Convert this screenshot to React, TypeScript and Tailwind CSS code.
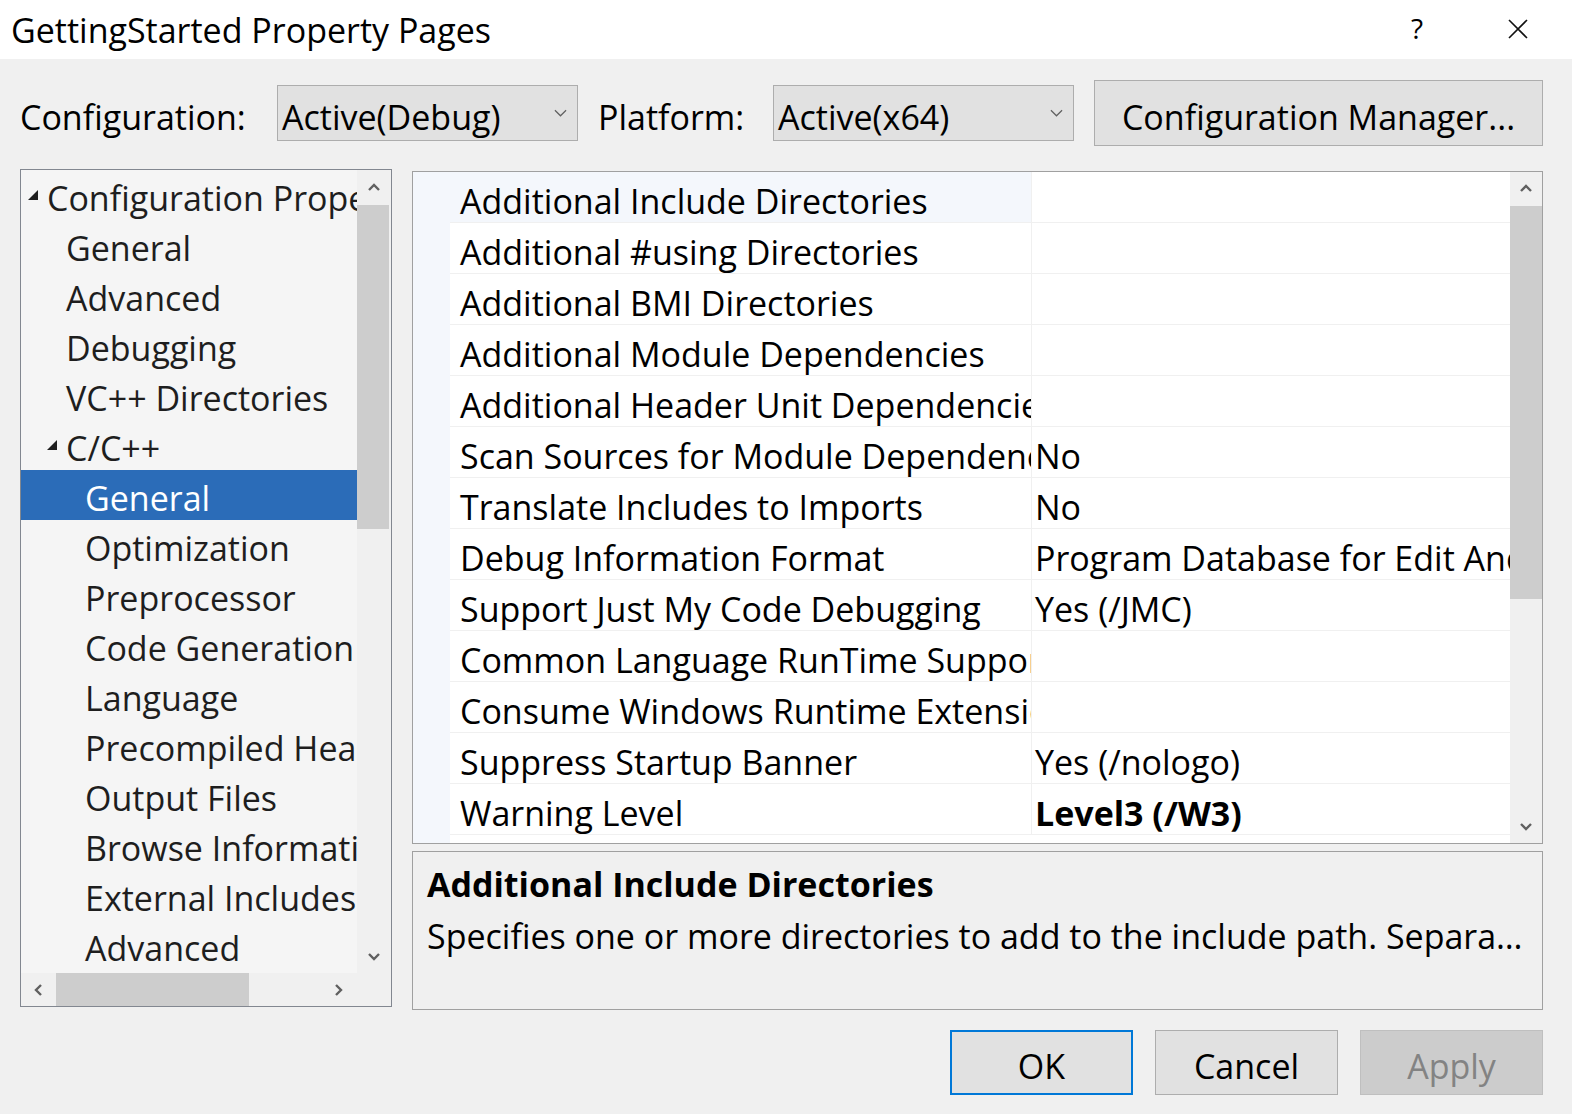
import React from 'react';

const font = { fontFamily: '"Open Sans", "Noto Sans", sans-serif' };

type Dir = 'up' | 'down' | 'left' | 'right';

const Chevron = ({ dir, className }: { dir: Dir; className?: string }) => {
    const pts: Record<Dir, string> = {
        up: '1,8 6,3 11,8',
        down: '1,4 6,9 11,4',
        left: '8,1 3,6 8,11',
        right: '4,1 9,6 4,11',
    };
    return (
        <svg viewBox="0 0 12 12" className={className ?? 'w-[12px] h-[12px]'}>
            <polyline points={pts[dir]} fill="none" stroke="#606060" strokeWidth="2.4" />
        </svg>
    );
};

const ComboArrow = () => (
    <svg viewBox="0 0 14 8" className="w-[13px] h-[8px]">
        <polyline points="1,1 7,7 13,1" fill="none" stroke="#606060" strokeWidth="1.3" />
    </svg>
);

const Expander = () => (
    <svg viewBox="0 0 10 10" className="w-[10px] h-[10px]">
        <polygon points="10,0 10,10 0,10" fill="#1e1e1e" />
    </svg>
);

interface TreeItem {
    label: string;
    level: number;
    expanded?: boolean;
    selected?: boolean;
}

const treeItems: TreeItem[] = [
    { label: 'Configuration Properties', level: 0, expanded: true },
    { label: 'General', level: 1 },
    { label: 'Advanced', level: 1 },
    { label: 'Debugging', level: 1 },
    { label: 'VC++ Directories', level: 1 },
    { label: 'C/C++', level: 1, expanded: true },
    { label: 'General', level: 2, selected: true },
    { label: 'Optimization', level: 2 },
    { label: 'Preprocessor', level: 2 },
    { label: 'Code Generation', level: 2 },
    { label: 'Language', level: 2 },
    { label: 'Precompiled Headers', level: 2 },
    { label: 'Output Files', level: 2 },
    { label: 'Browse Information', level: 2 },
    { label: 'External Includes', level: 2 },
    { label: 'Advanced', level: 2 },
];

const props: { name: string; value?: string; bold?: boolean }[] = [
    { name: 'Additional Include Directories' },
    { name: 'Additional #using Directories' },
    { name: 'Additional BMI Directories' },
    { name: 'Additional Module Dependencies' },
    { name: 'Additional Header Unit Dependencies' },
    { name: 'Scan Sources for Module Dependencies', value: 'No' },
    { name: 'Translate Includes to Imports', value: 'No' },
    { name: 'Debug Information Format', value: 'Program Database for Edit And Continue (/ZI)' },
    { name: 'Support Just My Code Debugging', value: 'Yes (/JMC)' },
    { name: 'Common Language RunTime Support' },
    { name: 'Consume Windows Runtime Extension' },
    { name: 'Suppress Startup Banner', value: 'Yes (/nologo)' },
    { name: 'Warning Level', value: 'Level3 (/W3)', bold: true },
];

const indent = ['pl-[7px]', 'pl-[26px]', 'pl-[45px]'];

const Tree = () => (
    <div className="w-[372px] h-[838px] border border-[#828790] bg-[#f0f0f0] flex flex-col">
        <div className="flex flex-1 min-h-0">
            {/* items */}
            <div className="w-[336px] bg-[#f5f5f5] overflow-hidden">
                {treeItems.map((it, i) => (
                    <div
                        key={i}
                        className={`h-[50px] flex items-center whitespace-nowrap ${indent[it.level]} ${
                            it.selected ? 'bg-[#2b6cb8] text-white' : 'text-[#1e1e1e]'
                        }`}
                    >
                        <span className="w-[19px] shrink-0 flex items-center">
                            {it.expanded && <Expander />}
                        </span>
                        <span className="text-[34px] leading-none pt-[6px]">{it.label}</span>
                    </div>
                ))}
            </div>
            {/* vertical scrollbar */}
            <div className="w-[34px] flex flex-col items-stretch">
                <div className="h-[35px] flex items-center justify-center">
                    <Chevron dir="up" />
                </div>
                <div className="h-[324px] mr-[2px] bg-[#cdcdcd]" />
                <div className="flex-1" />
                <div className="h-[35px] flex items-center justify-center">
                    <Chevron dir="down" />
                </div>
            </div>
        </div>
        {/* horizontal scrollbar */}
        <div className="h-[33px] flex items-stretch">
            <div className="w-[35px] flex items-center justify-center">
                <Chevron dir="left" />
            </div>
            <div className="w-[193px] bg-[#cdcdcd]" />
            <div className="w-[72px]" />
            <div className="w-[34px] flex items-center justify-center">
                <Chevron dir="right" />
            </div>
        </div>
    </div>
);

const Grid = () => (
    <div className="h-[673px] border border-[#a0a0a0] bg-white flex">
        <div className="w-[37px] bg-[#f4f7fc]" />
        <div className="flex-1 min-w-0 overflow-hidden">
            {props.map((p, i) => (
                <div key={i} className="h-[51px] flex border-b border-[#f0f0f0]">
                    <div
                        className={`w-[582px] shrink-0 border-r border-[#f0f0f0] pl-[10px] flex items-center overflow-hidden whitespace-nowrap text-black ${
                            i === 0 ? 'bg-[#f4f7fc]' : ''
                        }`}
                    >
                        <span className="text-[34px] leading-none pt-[7px]">{p.name}</span>
                    </div>
                    <div className="flex-1 min-w-0 pl-[3px] flex items-center overflow-hidden whitespace-nowrap text-black">
                        {p.value && (
                            <span className={`text-[34px] leading-none pt-[7px] ${p.bold ? 'font-bold' : ''}`}>
                                {p.value}
                            </span>
                        )}
                    </div>
                </div>
            ))}
        </div>
        <div className="w-[32px] bg-[#f0f0f0] flex flex-col">
            <div className="h-[34px] flex items-center justify-center">
                <Chevron dir="up" />
            </div>
            <div className="h-[393px] bg-[#cdcdcd]" />
            <div className="flex-1" />
            <div className="h-[34px] flex items-center justify-center">
                <Chevron dir="down" />
            </div>
        </div>
    </div>
);

const Button = ({ label, variant }: { label: string; variant?: 'default' | 'disabled' }) => (
    <div
        className={`w-[183px] h-[65px] flex items-center justify-center text-[34px] leading-none ${
            variant === 'default'
                ? 'border-2 border-[#0078d7] bg-[#e1e1e1] text-black'
                : variant === 'disabled'
                ? 'border border-[#bfbfbf] bg-[#cccccc] text-[#838383]'
                : 'border border-[#adadad] bg-[#e1e1e1] text-black'
        }`}
    >
        <span className="pt-[6px]">{label}</span>
    </div>
);

export default function App() {
    return (
        <div className="w-[1572px] h-[1114px] bg-[#f0f0f0] flex flex-col overflow-hidden" style={font}>
            {/* title bar */}
            <div className="h-[59px] bg-white flex items-center shrink-0">
                <span className="pl-[11px] text-[34px] leading-none text-black">GettingStarted Property Pages</span>
                <div className="flex-1" />
                <span className="text-[28px] leading-none text-black mr-[85px] pb-[4px]">?</span>
                <svg viewBox="0 0 20 20" className="w-[20px] h-[20px] mr-[44px] mb-[2px]">
                    <path d="M1 1 L19 19 M19 1 L1 19" stroke="#111" strokeWidth="1.6" />
                </svg>
            </div>

            {/* configuration row */}
            <div className="mt-[21px] h-[66px] flex items-center shrink-0 text-black">
                <div className="w-[277px] pl-[20px] text-[34px] leading-none pt-[8px]">Configuration:</div>
                <div className="w-[301px] h-[56px] border border-[#adadad] bg-[#e1e1e1] flex items-center pl-[4px] pr-[10px]">
                    <span className="flex-1 text-[34px] leading-none pt-[8px]">Active(Debug)</span>
                    <ComboArrow />
                </div>
                <div className="w-[195px] pl-[20px] text-[34px] leading-none pt-[8px]">Platform:</div>
                <div className="w-[301px] h-[56px] border border-[#adadad] bg-[#e1e1e1] flex items-center pl-[4px] pr-[10px]">
                    <span className="flex-1 text-[34px] leading-none pt-[8px]">Active(x64)</span>
                    <ComboArrow />
                </div>
                <div className="ml-[20px] w-[449px] h-[66px] border border-[#adadad] bg-[#e1e1e1] flex items-center justify-center">
                    <span className="text-[34px] leading-none pt-[8px]">Configuration Manager...</span>
                </div>
            </div>

            {/* main area */}
            <div className="mt-[23px] flex items-start pl-[20px] pr-[29px] shrink-0">
                <Tree />
                <div className="ml-[20px] mt-[2px] flex-1 min-w-0 flex flex-col gap-[7px]">
                    <Grid />
                    <div className="h-[159px] border border-[#a0a0a0] bg-[#f0f0f0] px-[14px] pt-[6px] text-black">
                        <div className="text-[34px] leading-[52px] font-bold whitespace-nowrap">Additional Include Directories</div>
                        <div className="text-[34px] leading-[52px] whitespace-nowrap overflow-hidden text-ellipsis">
                            Specifies one or more directories to add to the include path. Separate with semi-colons if more than one.
                        </div>
                    </div>
                </div>
            </div>

            {/* buttons */}
            <div className="mt-[20px] flex justify-end gap-[22px] pr-[29px]">
                <Button label="OK" variant="default" />
                <Button label="Cancel" />
                <Button label="Apply" variant="disabled" />
            </div>
        </div>
    );
}
